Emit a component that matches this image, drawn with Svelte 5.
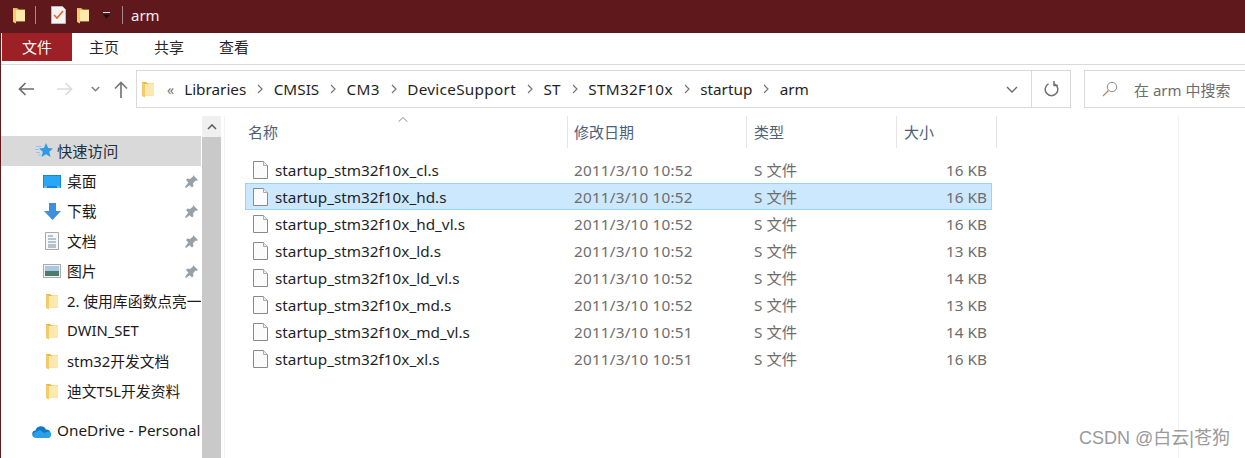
<script>
	const pinned = [
		{ name: '桌面', icon: 'desktop' },
		{ name: '下载', icon: 'download' },
		{ name: '文档', icon: 'docs' },
		{ name: '图片', icon: 'pics' }
	];
	const folders = ['2. 使用库函数点亮一', 'DWIN_SET', 'stm32开发文档', '迪文T5L开发资料'];
	const crumbs = [
		{ name: 'Libraries' },
		{ name: 'CMSIS' },
		{ name: 'CM3', wide: true },
		{ name: 'DeviceSupport', wide: true },
		{ name: 'ST', wide: true },
		{ name: 'STM32F10x', wide: true },
		{ name: 'startup' },
		{ name: 'arm' }
	];
	const files = [
		{ name: 'startup_stm32f10x_cl.s', date: '2011/3/10 10:52', size: '16 KB' },
		{ name: 'startup_stm32f10x_hd.s', date: '2011/3/10 10:52', size: '16 KB', selected: true },
		{ name: 'startup_stm32f10x_hd_vl.s', date: '2011/3/10 10:52', size: '16 KB' },
		{ name: 'startup_stm32f10x_ld.s', date: '2011/3/10 10:52', size: '13 KB' },
		{ name: 'startup_stm32f10x_ld_vl.s', date: '2011/3/10 10:52', size: '14 KB' },
		{ name: 'startup_stm32f10x_md.s', date: '2011/3/10 10:52', size: '13 KB' },
		{ name: 'startup_stm32f10x_md_vl.s', date: '2011/3/10 10:51', size: '14 KB' },
		{ name: 'startup_stm32f10x_xl.s', date: '2011/3/10 10:51', size: '16 KB' }
	];
</script>

{#snippet folder()}
	<svg class="folder" width="12" height="17" viewBox="0 0 12 17">
		<path d="M0 1h4l2 1.500h6V14H0z" fill="#e8b84a" />
		<path d="M3 3h9v11H3z" fill="#fde9ab" />
		<path d="M0 1.500l3 1.500v13.500L0 15z" fill="#f3cb68" />
		<path d="M3 14h9v.500H3z" fill="#eec766" />
	</svg>
{/snippet}

{#snippet pin()}
	<svg class="pin" width="13" height="13" viewBox="0 0 13 13">
		<path d="M8 0l5 5-1.500 1-1-.5-2.500 3 .5 2.500-1.500 1.500-2.300-2.300L1 13 0 12l3.300-4.600L1 5l1.500-1.500 2.500.5 3-2.500z" fill="#98a0a8" />
	</svg>
{/snippet}

<div class="window">
	<header class="titlebar">
		{@render folder()}
		<span class="bar-sep first"></span>
		<svg class="check" width="15" height="18" viewBox="0 0 15 18">
			<path d="M.5.500h11l3 3v14H.5z" fill="#f4f4f4" stroke="#b9b9b9" />
			<path d="M3 9l3 3 6-7" fill="none" stroke="#e8632a" stroke-width="1.600" />
		</svg>
		{@render folder()}
		<svg class="caret" width="9" height="7" viewBox="0 0 9 7">
			<path d="M1 .5h7" stroke="#ddd" />
			<path d="M1 2.500h7L4.500 6.500z" fill="#111" />
		</svg>
		<span class="bar-sep"></span>
		<span class="title">arm</span>
	</header>

	<nav class="tabs">
		<span class="tab active">文件</span>
		<span class="tab">主页</span>
		<span class="tab">共享</span>
		<span class="tab">查看</span>
	</nav>

	<div class="toolbar">
		<div class="nav-buttons">
			<svg width="16" height="14" viewBox="0 0 16 14"><path d="M16 7H1.500M7.500 1 1.500 7l6 6" fill="none" stroke="#6e6e6e" stroke-width="1.700" /></svg>
			<svg class="fwd" width="16" height="14" viewBox="0 0 16 14"><path d="M0 7h14.500M8.500 1l6 6-6 6" fill="none" stroke="#dcdcdc" stroke-width="1.700" /></svg>
			<svg class="down" width="9" height="6" viewBox="0 0 9 6"><path d="M.8 1l3.700 3.700L8.200 1" fill="none" stroke="#7d7d7d" stroke-width="1.500" /></svg>
			<svg class="up" width="14" height="17" viewBox="0 0 14 17"><path d="M7 17V1.500M1 7.500l6-6 6 6" fill="none" stroke="#777" stroke-width="1.700" /></svg>
		</div>
		<div class="address">
			{@render folder()}
			<span class="chev-double">«</span>
			{#each crumbs as crumb, i}
				<span class="crumb" class:wide={crumb.wide}>{crumb.name}</span>
				{#if i < crumbs.length - 1}
					<svg class="crumb-arrow" width="6" height="10" viewBox="0 0 6 10"><path d="M1 1l4 4-4 4" fill="none" stroke="#777" stroke-width="1.200" /></svg>
				{/if}
			{/each}
			<svg class="drop" width="12" height="7" viewBox="0 0 12 7"><path d="M1 1l5 5 5-5" fill="none" stroke="#6a6a6a" stroke-width="1.400" /></svg>
			<span class="refresh">
				<svg width="15" height="16" viewBox="0 0 15 16">
					<path d="M4.500 2.800A6.300 6.300 0 1 0 10.500 2.800" fill="none" stroke="#707070" stroke-width="1.500" />
					<path d="M10 0v4.500h4" fill="none" stroke="#707070" stroke-width="1.500" />
				</svg>
			</span>
		</div>
		<div class="search">
			<svg width="16" height="16" viewBox="0 0 16 16">
				<circle cx="10" cy="6" r="4.700" fill="none" stroke="#8a8a8a" stroke-width="1" />
				<path d="M6.500 9.500 1 15" stroke="#b08a5a" stroke-width="1.200" />
			</svg>
			<span>在 arm 中搜索</span>
		</div>
	</div>

	<div class="body">
		<aside class="sidebar">
			<div class="side-row quick">
				<svg width="18" height="16" viewBox="0 0 18 16">
					<path d="M11 0l2.200 5 4.800.4-3.700 3.300 1.200 5.300-4.500-2.800L6.600 14l1.200-5.300L4 5.400 9 5z" fill="#2f9be8" />
					<path d="M1 3.500h5M0 6.500h4M1 9.500h4M3 12h3" stroke="#8fc4ec" />
				</svg>
				<span class="side-label">快速访问</span>
			</div>
			{#each pinned as item}
				<div class="side-row sub">
					<span class="side-icon">
						{#if item.icon === 'desktop'}
							<svg width="18" height="13" viewBox="0 0 18 13">
								<rect width="18" height="13" fill="#1787d8" />
								<rect x="1" y="1" width="16" height="10" fill="#2aa6f6" />
								<path d="M1 12h3M14 12h3" stroke="#cfe9fb" />
							</svg>
						{:else if item.icon === 'download'}
							<svg width="17" height="17" viewBox="0 0 17 17"><path d="M5 0h7v8h5l-8.500 9L0 8h5z" fill="#3f8fe0" /></svg>
						{:else if item.icon === 'docs'}
							<svg width="14" height="18" viewBox="0 0 14 18">
								<path d="M.5.500h13v17H.5z" fill="#f7f7f7" stroke="#a9a9a9" />
								<path d="M3 4h5M3 7h8M3 10h8M3 13h8M3 15h8" stroke="#6f8fa8" />
							</svg>
						{:else}
							<svg width="18" height="14" viewBox="0 0 18 14">
								<rect x=".5" y=".5" width="17" height="13" fill="#f2f2f2" stroke="#ababab" />
								<rect x="2" y="2" width="14" height="5" fill="#a9c9e0" />
								<rect x="2" y="7" width="14" height="5" fill="#4d7a6a" />
							</svg>
						{/if}
					</span>
					<span class="side-label">{item.name}</span>
					{@render pin()}
				</div>
			{/each}
			{#each folders as name}
				<div class="side-row sub">
					<span class="side-icon">{@render folder()}</span>
					<span class="side-label">{name}</span>
				</div>
			{/each}
			<div class="side-row onedrive">
				<svg width="20" height="13" viewBox="0 0 20 13">
					<path d="M4 12.500a3.500 3.500 0 0 1-.5-7 5.500 5.500 0 0 1 10.400-1 4.300 4.300 0 0 1 2.600 8z" fill="#0f78c8" />
					<path d="M4 13a3 3 0 0 1-1-5.800L8 5l4 3 4-1.500A3.300 3.300 0 0 1 16.500 13z" fill="#2aa0e8" />
				</svg>
				<span class="side-label">OneDrive - Personal</span>
			</div>
		</aside>

		<div class="scrollbar">
			<span class="scroll-up">
				<svg width="10" height="6" viewBox="0 0 10 6"><path d="M1 5l4-4 4 4" fill="none" stroke="#606060" stroke-width="1.600" /></svg>
			</span>
		</div>

		<main class="list">
			<div class="list-head">
				<svg class="sort" width="10" height="5" viewBox="0 0 10 5"><path d="M.5 4.800L5 .5l4.500 4.300" fill="none" stroke="#8a8a8a" /></svg>
				<span class="col name">名称</span>
				<span class="col date">修改日期</span>
				<span class="col type">类型</span>
				<span class="col size">大小</span>
			</div>
			<div class="rows">
				{#each files as file}
					<div class="file" class:selected={file.selected}>
						<span class="file-name">
							<svg width="15" height="18" viewBox="0 0 15 18">
								<path d="M.5.500h10l4 4v13H.5z" fill="#fbfbfb" stroke="#8a8a8a" />
								<path d="M10.500.500v4h4" fill="#eee" stroke="#aaa" />
							</svg>
							<span>{file.name}</span>
						</span>
						<span class="file-date">{file.date}</span>
						<span class="file-type">S 文件</span>
						<span class="file-size">{file.size}</span>
					</div>
				{/each}
			</div>
		</main>
	</div>

	<span class="watermark">CSDN @白云|苍狗</span>
</div>

<style>
	:global(body) {
		margin: 0;
		background: #fff;
	}

	.window {
		position: relative;
		width: 1245px;
		height: 458px;
		overflow: hidden;
		box-sizing: border-box;
		border-left: 1px solid #5f181c;
		font-family: "Noto Sans", "Noto Sans CJK SC", sans-serif;
		font-size: 15.300px;
		color: #1a1a1a;
	}

	.titlebar {
		display: flex;
		align-items: center;
		box-sizing: border-box;
		height: 33px;
		padding: 0 0 3px 12px;
		background: #5f181c;
	}

	.bar-sep {
		width: 1px;
		height: 18px;
		margin: 0 8px;
		background: #a58a8c;
	}

	.bar-sep.first {
		margin: 0 15px 0 10px;
	}

	.check {
		margin-right: 11px;
	}

	.caret {
		margin: 0 3px 0 13px;
	}

	.title {
		color: #f4eded;
		font-size: 15px;
	}

	.tabs {
		display: flex;
		height: 32px;
		box-sizing: border-box;
		border-bottom: 1px solid #dadada;
		padding-left: 1px;
	}

	.tab {
		width: 65px;
		height: 28px;
		line-height: 28px;
		text-align: center;
		font-size: 15px;
		color: #262626;
	}

	.tab.active {
		width: 70px;
		margin-right: -0.5px;
		background: #9c2026;
		color: #fff;
	}

	.toolbar {
		display: flex;
		align-items: center;
		height: 38px;
		margin-top: 5px;
	}

	.nav-buttons {
		display: flex;
		align-items: center;
		width: 135px;
		padding-left: 17px;
		box-sizing: border-box;
		flex-shrink: 0;
	}

	.fwd {
		margin-left: 23px;
	}

	.down {
		margin-left: 18px;
	}

	.up {
		margin-left: 14px;
	}

	.address {
		display: flex;
		align-items: center;
		flex-shrink: 0;
		box-sizing: border-box;
		width: 935px;
		height: 38px;
		padding-left: 5px;
		border: 1px solid #d9d9d9;
	}

	.chev-double {
		margin: 0 10px 0 13px;
		color: #777;
		font-size: 14px;
	}

	.crumb {
		color: #1f1f1f;
		padding-bottom: 1px;
	}

	.crumb.wide {
		letter-spacing: 0.3px;
	}

	.crumb-arrow {
		margin: 0 10.700px;
	}

	.drop {
		margin-left: auto;
		margin-right: 13px;
	}

	.refresh {
		display: flex;
		align-items: center;
		justify-content: center;
		width: 38px;
		height: 36px;
		border-left: 1px solid #d9d9d9;
	}

	.search {
		display: flex;
		align-items: center;
		gap: 16px;
		box-sizing: border-box;
		width: 170px;
		height: 38px;
		margin-left: 13px;
		padding-left: 17px;
		border: 1px solid #d9d9d9;
		color: #6d6d6d;
		font-size: 15px;
		flex-shrink: 0;
	}

	.body {
		display: flex;
		margin-top: 8px;
	}

	.sidebar {
		width: 200px;
		padding-top: 20px;
		overflow: hidden;
		flex-shrink: 0;
	}

	.side-row {
		display: flex;
		align-items: center;
		height: 30px;
		white-space: nowrap;
	}

	.side-label {
		padding-bottom: 2px;
	}

	.quick {
		padding-left: 34px;
		gap: 4px;
		background: #d9d9d9;
		color: #20303c;
	}

	.sub {
		padding-left: 41px;
		font-size: 14.800px;
	}

	.side-icon {
		display: flex;
		justify-content: center;
		align-items: center;
		width: 20px;
		margin-right: 5px;
		flex-shrink: 0;
	}

	.sub .side-label {
		flex: 1;
	}

	.pin {
		margin-right: 3px;
	}

	.onedrive {
		margin-top: 10px;
		padding-left: 31px;
		gap: 5px;
	}

	.scrollbar {
		width: 19px;
		height: 342px;
		margin-left: 1px;
		background: #c9c9c9;
		flex-shrink: 0;
	}

	.scroll-up {
		display: flex;
		align-items: center;
		justify-content: center;
		height: 21px;
		background: #f0f0f0;
	}

	.list {
		position: relative;
		flex: 1;
		height: 342px;
		margin-left: 3px;
		border-left: 1px solid #f2f2f2;
	}

	/* faint trailing column line on the far right */
	.list::after {
		content: "";
		position: absolute;
		top: 0;
		bottom: 0;
		left: 953px;
		width: 1px;
		background: #f1f1f1;
	}

	.list-head {
		position: relative;
		display: grid;
		grid-template-columns: 322px 179px 150px 100px;
		height: 32px;
		margin-left: 21px;
	}

	.sort {
		position: absolute;
		left: 152px;
		top: 1px;
	}

	.col {
		display: flex;
		align-items: center;
		padding: 0 0 2px 7px;
		border-right: 1px solid #e5e5e5;
		color: #4c607a;
		font-size: 15px;
	}

	.col.name {
		padding-left: 2px;
	}

	.col.date {
		padding-left: 6px;
	}

	.rows {
		margin-top: 8px;
		margin-left: 20px;
		width: 747px;
	}

	.file {
		display: grid;
		grid-template-columns: 322px 180px 150px 89px;
		align-items: center;
		box-sizing: border-box;
		height: 27px;
		border: 1px solid transparent;
		color: #6d6d6d;
	}

	.file.selected {
		background: #cce8ff;
		border-color: #99d1ff;
	}

	.file-name {
		display: flex;
		align-items: center;
		gap: 7px;
		padding-left: 7px;
		color: #1f1f1f;
	}

	.file-date {
		padding-left: 6px;
		letter-spacing: 0.2px;
	}

	.file-type {
		padding: 0 0 2px 6px;
	}

	.file-size {
		text-align: right;
	}

	.watermark {
		position: absolute;
		right: 15px;
		bottom: 9px;
		color: #9a9a9a;
		font-family: "Liberation Sans", "Noto Sans CJK SC", sans-serif;
		font-size: 18px;
	}
</style>
